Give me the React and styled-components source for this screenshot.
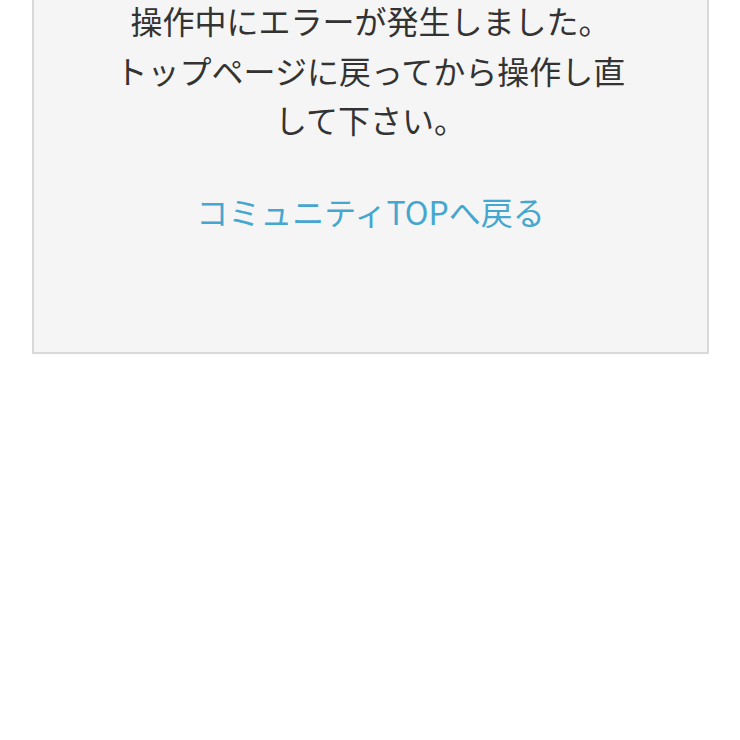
import styled, { createGlobalStyle } from "styled-components";

const GlobalStyle = createGlobalStyle`
  body {
    margin: 0;
    background: #ffffff;
    font-family: "Noto Sans CJK JP", "Noto Sans", sans-serif;
  }
`;

const Page = styled.div`
  margin-top: -48px;
  padding: 0 31px 0 32px;
`;

const ErrorBox = styled.div`
  box-sizing: border-box;
  background: #f5f5f5;
  border: 2px solid #d9d9d9;
  padding: 42px 70px 116px;
  text-align: center;
`;

const Message = styled.p`
  margin: 0;
  color: #333333;
  font-size: 32px;
  line-height: 49.5px;
`;

const BackLink = styled.a`
  display: block;
  margin-top: 42px;
  color: #45a7cf;
  font-size: 32px;
  line-height: 49.5px;
  text-decoration: none;
`;

export default function App() {
  return (
    <>
      <GlobalStyle />
      <Page>
        <ErrorBox>
          <Message>
            操作中にエラーが発生しました。
            <br />
            トップページに戻ってから操作し直して下さい。
          </Message>
          <BackLink href="#">コミュニティTOPへ戻る</BackLink>
        </ErrorBox>
      </Page>
    </>
  );
}
